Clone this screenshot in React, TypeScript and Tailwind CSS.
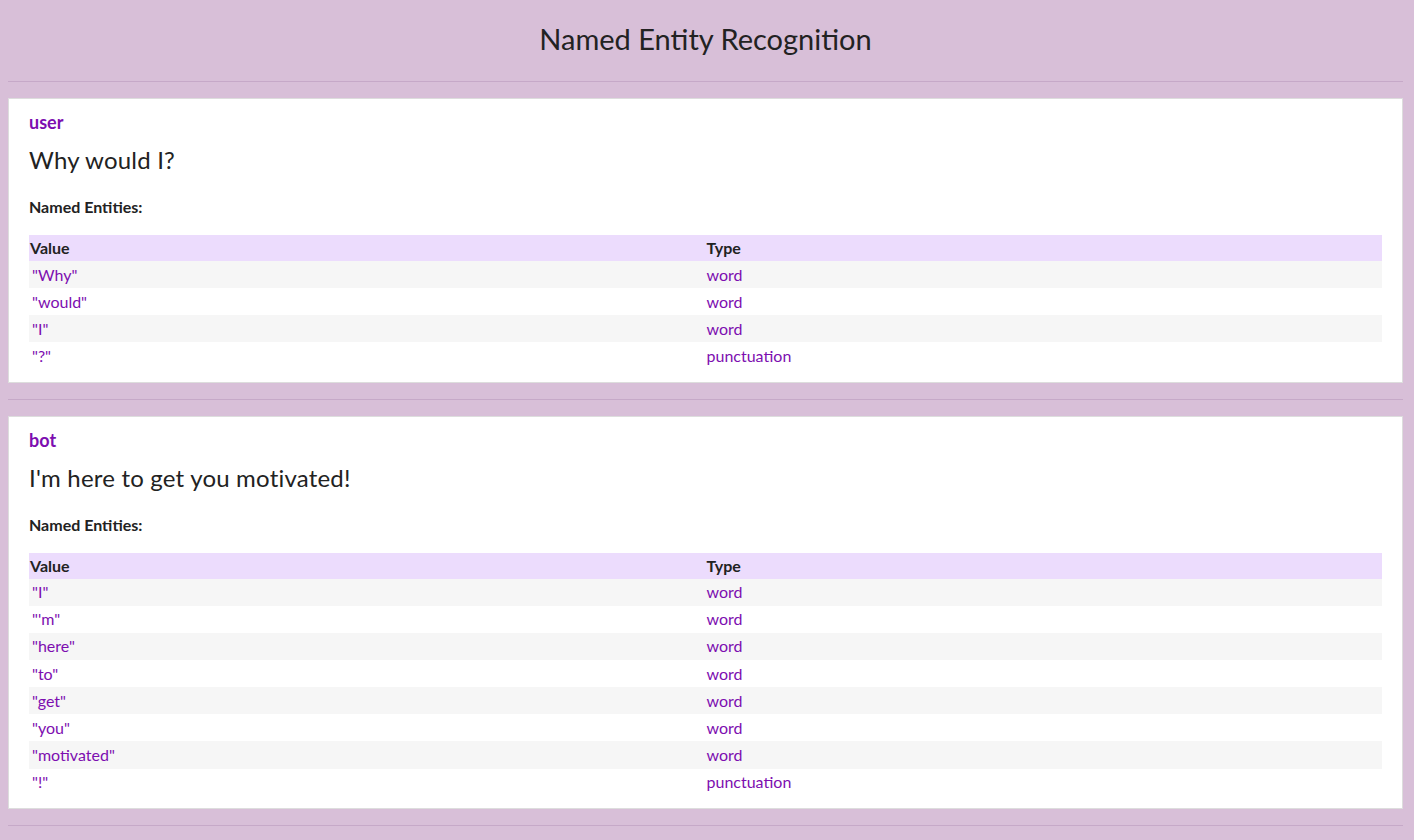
import React from "react";

type Ent = { v: string; t: string };
const messages: { who: string; text: string; ents: Ent[] }[] = [
  {
    who: "user",
    text: "Why would I?",
    ents: [
      { v: '"Why"', t: "word" },
      { v: '"would"', t: "word" },
      { v: '"I"', t: "word" },
      { v: '"?"', t: "punctuation" },
    ],
  },
  {
    who: "bot",
    text: "I'm here to get you motivated!",
    ents: [
      { v: '"I"', t: "word" },
      { v: '"\'m"', t: "word" },
      { v: '"here"', t: "word" },
      { v: '"to"', t: "word" },
      { v: '"get"', t: "word" },
      { v: '"you"', t: "word" },
      { v: '"motivated"', t: "word" },
      { v: '"!"', t: "punctuation" },
    ],
  },
];

export default function App() {
  return (
    <div
      className="min-h-[840px] bg-[#d8bfd8] pl-2 pr-[11px] text-[#222222]"
      style={{ fontFamily: "Lato, 'Noto Sans', sans-serif" }}
    >
      <h1 className="pt-[22px] pb-[25px] text-center text-[29px] leading-[34px] font-normal">
        Named Entity Recognition
      </h1>
      <div className="h-px bg-[#c6a9c8]" />
      {messages.map((m, i) => (
        <div key={i}>
          <div className="mt-4 border border-[#dddddd] bg-white px-5 pt-[12px] pb-[12px]">
            <div className="text-[18px] leading-[22px] font-bold text-[#7d0eb0]">{m.who}</div>
            <div className="mt-[12px] text-[24px] leading-[30px] tracking-[0.2px]">{m.text}</div>
            <div className="mt-[22px] text-[16px] leading-[20px] font-bold">Named Entities:</div>
            <table className="mt-[18px] w-full table-fixed border-collapse text-[16px]">
              <thead>
                <tr className="h-[26px] bg-[#ecdcfd] text-left">
                  <th className="w-1/2 px-px font-bold">Value</th>
                  <th className="w-1/2 px-px font-bold">Type</th>
                </tr>
              </thead>
              <tbody>
                {m.ents.map((e, j) => (
                  <tr key={j} className={j % 2 === 0 ? "h-[27.15px] bg-[#f6f6f6]" : "h-[27.15px] bg-white"}>
                    <td className="px-[3px] text-[#7d0eb0]">{e.v}</td>
                    <td className="px-px text-[#7d0eb0]">{e.t}</td>
                  </tr>
                ))}
              </tbody>
            </table>
          </div>
          <div className="mt-4 h-px bg-[#c6a9c8]" />
        </div>
      ))}
    </div>
  );
}
